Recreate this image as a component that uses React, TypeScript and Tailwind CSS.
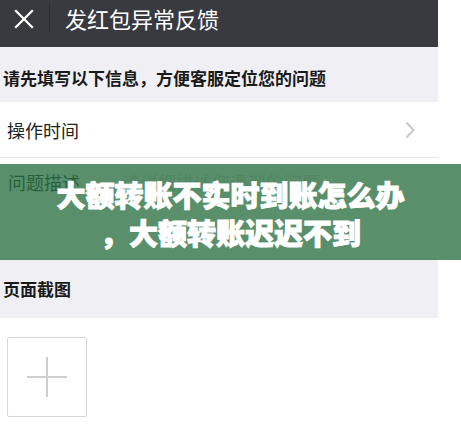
import React from "react";

const font = { fontFamily: '"Noto Sans CJK SC", "Noto Sans", sans-serif' };

export default function App() {
  return (
    <div className="relative w-[461px] h-[425px] bg-white overflow-hidden" style={font}>
      <div className="w-[438px] flex flex-col">
        {/* header */}
        <div className="h-[47px] bg-[#393a3f] flex items-start">
          <div className="w-[49px] h-[36px] flex items-center justify-center">
            <svg width="20" height="20" viewBox="0 0 20 20" className="mt-[1px] -ml-[2px]">
              <path d="M2 2 L18 18 M18 2 L2 18" stroke="#ffffff" strokeWidth="2.2" strokeLinecap="square" />
            </svg>
          </div>
          <div className="w-px h-[30px] mt-[3px] bg-[#2c2d31]" />
          <div className="ml-[15px] h-[36px] flex items-center text-[22px] leading-none text-white">发红包异常反馈</div>
        </div>
        {/* gray tip */}
        <div className="h-[55px] bg-[#efeff4] flex items-center pl-[3px] pt-[5px]">
          <span className="text-[17px] font-bold text-[#1a1a1a] leading-none">请先填写以下信息，方便客服定位您的问题</span>
        </div>
        {/* operation time row */}
        <div className="h-[56px] bg-white flex items-center justify-between pl-[7px] pr-[23px] border-b border-[#e6e6e6]">
          <span className="text-[18px] leading-none text-[#222]">操作时间</span>
          <svg width="10" height="18" viewBox="0 0 10 18">
            <path d="M1.5 1.5 L8.5 9 L1.5 16.5" fill="none" stroke="#c7c7cc" strokeWidth="2" />
          </svg>
        </div>
        {/* description row */}
        <div className="h-[100px] bg-white flex items-start pl-[8px] pt-[12px]">
          <span className="text-[18px] leading-[24px] text-[#222] w-[114px]">问题描述</span>
          <span className="text-[18px] leading-[24px] text-[#d2d2d2]">请详细描述您遇到的问题</span>
        </div>
        {/* screenshot header */}
        <div className="h-[60px] bg-[#efeff4] flex items-center pl-[3px] pt-[1px]">
          <span className="text-[17px] font-bold text-[#1a1a1a] leading-none">页面截图</span>
        </div>
        {/* upload box */}
        <div className="pl-[7px] pt-[19px]">
          <div className="w-[80px] h-[80px] border border-[#d6d6d6] rounded-[2px] flex items-center justify-center">
            <svg width="40" height="40" viewBox="0 0 40 40">
              <path d="M20 0 V40 M0 20 H40" stroke="#cfcfcf" strokeWidth="2" />
            </svg>
          </div>
        </div>
      </div>

      {/* green overlay banner */}
      <div className="absolute left-0 top-[164px] w-[461px] h-[96px] bg-[rgba(44,112,67,0.78)] flex flex-col items-center justify-center pt-[2px]">
        <div className="text-[29px] leading-[38px] font-black text-white [-webkit-text-stroke:1px_white]">大额转账不实时到账怎么办</div>
        <div className="text-[29px] leading-[38px] font-black text-white [-webkit-text-stroke:1px_white]">，大额转账迟迟不到</div>
      </div>
    </div>
  );
}
